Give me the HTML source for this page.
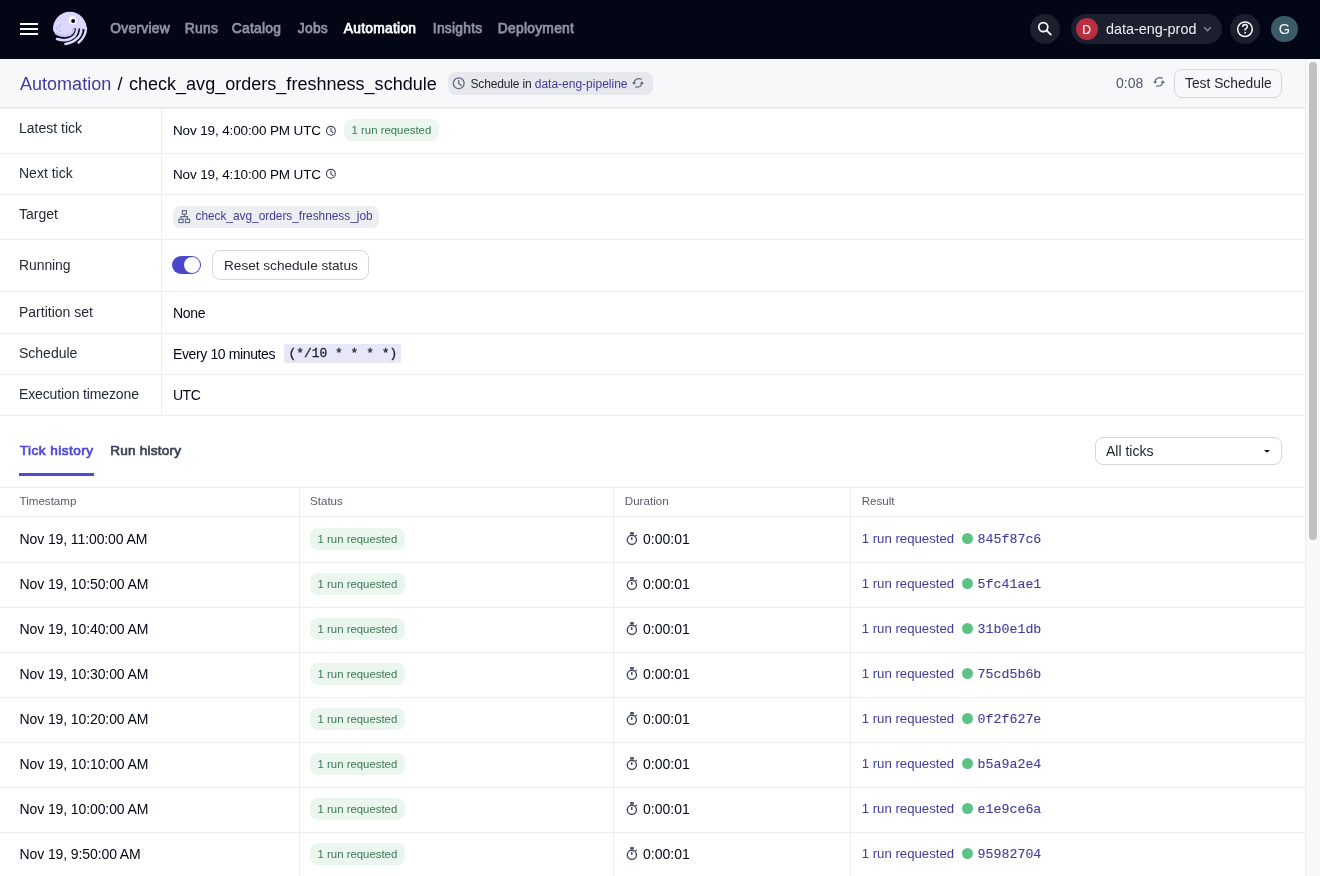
<!DOCTYPE html>
<html><head><meta charset="utf-8"><style>
*{box-sizing:border-box;margin:0;padding:0}
html,body{width:1320px;height:876px;overflow:hidden;background:#fff;font-family:"Liberation Sans",sans-serif;color:#030615}
.abs{position:absolute}
svg{position:absolute;overflow:visible}
#nav{position:absolute;left:0;top:0;width:1320px;height:59px;background:#030615}
.nl{position:absolute;top:21px;font-size:13.8px;letter-spacing:0.27px;font-weight:400;-webkit-text-stroke:0.75px currentColor;color:#8d93a3;white-space:nowrap;line-height:16px}
.circ{position:absolute;border-radius:50%}
#hdr{position:absolute;left:0;top:59px;width:1305px;height:49px;background:#f7f8fa;border-bottom:1px solid #e4e6ea;box-shadow:0 1px 0 #eceef1}
#sb{position:absolute;left:1305px;top:59px;width:15px;height:817px;background:#f8f8f8;border-left:1px solid #ededed}
#thumb{position:absolute;left:1309px;top:62px;width:8px;height:478px;background:#c1c1c1;border-radius:4px}
.hl{position:absolute;left:0;width:1305px;height:1px;background:#eceef2}
.vl{position:absolute;width:1px;background:#eceef2}
.t14{position:absolute;font-size:14px;line-height:16px;white-space:nowrap}
.lbl{color:#252b36;left:19px}
.val{color:#030615;left:173px}
.badge{position:absolute;height:22px;border-radius:8px;background:#eaf6ee;color:#3a7a52;font-size:11.4px;line-height:22px;padding:0 0 0 7.5px;white-space:nowrap}
.link{color:#3e3c9c}
.mono{font-family:"Liberation Mono",monospace;-webkit-text-stroke:0.1px currentColor}
.th{position:absolute;top:494px;font-size:11.6px;line-height:14px;color:#555c6c}
.row{position:absolute;left:0;width:1305px;height:45px}
</style></head><body><div id="wrap" style="position:absolute;left:0;top:0;width:1320px;height:876px;will-change:transform">
<div id="nav">
<div class="abs" style="left:20px;top:22.8px;width:17.5px;height:1.8px;background:#fff"></div>
<div class="abs" style="left:20px;top:27.8px;width:17.5px;height:1.8px;background:#fff"></div>
<div class="abs" style="left:20px;top:32.8px;width:17.5px;height:1.8px;background:#fff"></div>
<svg style="left:48px;top:8px" width="44" height="42" viewBox="0 0 918 876">
<path d="M106 470 A352 352 0 1 1 806 470 L742 440 L650 430 L535 430 Q525 585 330 600 Q170 600 106 470 Z" fill="#dad8fb"/>
<path d="M150 520 Q300 620 460 560 Q525 520 540 440" fill="none" stroke="#c6c2f6" stroke-width="50"/>
<g fill="none" stroke="#dad8fb" stroke-linecap="round">
<path d="M188 648 Q410 715 550 590 Q605 530 612 430" stroke-width="54"/>
<path d="M365 752 Q585 705 665 565 Q700 495 695 420" stroke-width="54"/>
<path d="M640 720 Q795 585 792 420" stroke-width="52"/>
</g>
<circle cx="515" cy="255" r="82" fill="#ffffff"/>
<circle cx="525" cy="272" r="42" fill="#030615"/>
<circle cx="245" cy="370" r="22" fill="#bcb8f2"/>
<circle cx="190" cy="425" r="22" fill="#bcb8f2"/>
<circle cx="245" cy="480" r="22" fill="#bcb8f2"/>
</svg>
<div class="nl" style="left:110.3px">Overview</div>
<div class="nl" style="left:184.8px">Runs</div>
<div class="nl" style="left:231.8px">Catalog</div>
<div class="nl" style="left:297.8px">Jobs</div>
<div class="nl" style="left:343.8px;color:#ffffff">Automation</div>
<div class="nl" style="left:432.8px">Insights</div>
<div class="nl" style="left:497.8px">Deployment</div>
<div class="circ" style="left:1030px;top:14px;width:30px;height:30px;background:#1c1f2d"></div>
<svg style="left:0;top:0" width="1" height="1"><circle cx="1043.3" cy="27.1" r="4.5" fill="none" stroke="#fff" stroke-width="1.7"/><path d="M1046.6 30.4 L1050.8 34.6" stroke="#fff" stroke-width="1.8" stroke-linecap="round"/></svg>
<div class="abs" style="left:1071px;top:14px;width:151px;height:30px;border-radius:15px;background:#1c1f2d"></div>
<div class="circ" style="left:1076px;top:18px;width:22px;height:22px;background:#b92f41"></div>
<div class="abs" style="left:1081.6px;top:22.8px;width:10px;text-align:center;font-size:12px;line-height:14px;color:#f4f4f6;-webkit-text-stroke:0.2px #f4f4f6">D</div>
<div class="abs" style="left:1106px;top:21px;font-size:14.4px;line-height:16px;color:#eef0f4;white-space:nowrap">data-eng-prod</div>
<svg style="left:0;top:0" width="1" height="1"><path d="M1204.2 27.2 L1207.5 30.8 L1210.8 27.2" fill="none" stroke="#8a90a0" stroke-width="1.3"/></svg>
<div class="circ" style="left:1230px;top:14px;width:30px;height:30px;background:#1c1f2d"></div>
<svg style="left:0;top:0" width="1" height="1"><circle cx="1245" cy="29.2" r="7.3" fill="none" stroke="#fff" stroke-width="1.5"/><path d="M1242.7 27.1 Q1242.7 24.6 1245 24.6 Q1247.3 24.6 1247.3 26.8 Q1247.3 28.2 1245.1 29.2 L1245.1 30.6" fill="none" stroke="#fff" stroke-width="1.5"/><rect x="1244.3" y="31.9" width="1.6" height="1.6" fill="#fff"/></svg>
<div class="circ" style="left:1271px;top:15.5px;width:26.5px;height:26.5px;background:#3b5b66"></div>
<div class="abs" style="left:1274px;top:20.8px;width:21px;text-align:center;font-size:14.5px;line-height:16px;color:#f6f7f8">G</div>
</div>
<div id="hdr"></div>
<div class="abs" style="left:20px;top:73px;font-size:18px;line-height:22px;white-space:nowrap;letter-spacing:0.02px;word-spacing:1.3px"><span class="link">Automation</span> / check_avg_orders_freshness_schdule</div>
<div class="abs" style="left:448px;top:72px;width:205px;height:23px;border-radius:8px;background:#e6e8ed"></div>
<svg style="left:0;top:0" width="1" height="1"><circle cx="458.7" cy="83.3" r="5.4" fill="none" stroke="#5f6b7f" stroke-width="1.3"/><path d="M458.7 80.33 V83.3 L461.13 85.46" fill="none" stroke="#5f6b7f" stroke-width="1.3" stroke-linecap="round" stroke-linejoin="round"/></svg>
<div class="abs" style="left:470.5px;top:76.5px;font-size:12px;line-height:14px;white-space:nowrap;color:#1c212b;letter-spacing:-0.15px">Schedule in <span class="link" style="letter-spacing:0">data-eng-pipeline</span></div>
<svg style="left:637.5px;top:83.2px" width="1" height="1" viewBox="0 0 1 1"><g transform="scale(1.0,0.85)" fill="none" stroke="#5f6b7f" stroke-width="1.4" stroke-linecap="round"><path d="M3.2 -4.5 A4.6 4.6 0 0 0 -3.8 -0.2"/><path d="M-2.2 4.5 A4.6 4.6 0 0 0 3.8 0.6"/></g><g transform="scale(1.0,0.85)" fill="#5f6b7f"><path d="M-6.2 -0.6 L-1.6 -0.6 L-3.9 2.2 Z"/><path d="M6.2 0.8 L1.6 0.8 L3.9 -2.0 Z"/></g></svg>
<div class="abs" style="left:1116px;top:75px;font-size:14px;line-height:16px;color:#4f5768">0:08</div>
<svg style="left:1158.5px;top:82px" width="1" height="1" viewBox="0 0 1 1"><g transform="scale(1.0,0.85)" fill="none" stroke="#5f6b7f" stroke-width="1.4" stroke-linecap="round"><path d="M3.2 -4.5 A4.6 4.6 0 0 0 -3.8 -0.2"/><path d="M-2.2 4.5 A4.6 4.6 0 0 0 3.8 0.6"/></g><g transform="scale(1.0,0.85)" fill="#5f6b7f"><path d="M-6.2 -0.6 L-1.6 -0.6 L-3.9 2.2 Z"/><path d="M6.2 0.8 L1.6 0.8 L3.9 -2.0 Z"/></g></svg>
<div class="abs" style="left:1174px;top:69px;width:108px;height:29px;border:1px solid #d3d6de;border-radius:8px;background:#f7f8fa"></div>
<div class="abs" style="left:1185px;top:76px;font-size:13.8px;line-height:16px;color:#1f2430;white-space:nowrap">Test Schedule</div>
<div id="sb"></div><div id="thumb"></div>
<div class="vl" style="left:161px;top:108px;height:307px"></div>
<div class="hl" style="top:153px"></div>
<div class="hl" style="top:194px"></div>
<div class="hl" style="top:239px"></div>
<div class="hl" style="top:291px"></div>
<div class="hl" style="top:333px"></div>
<div class="hl" style="top:374px"></div>
<div class="hl" style="top:415px"></div>
<div class="t14 lbl" style="top:120px">Latest tick</div>
<div class="t14 val" style="top:123px;font-size:13.5px;letter-spacing:-0.13px">Nov 19, 4:00:00 PM UTC</div>
<svg style="left:0;top:0" width="1" height="1"><circle cx="330.9" cy="130.8" r="4.4" fill="none" stroke="#3e4452" stroke-width="1.1"/><path d="M330.9 128.38000000000002 V130.8 L332.88 132.56" fill="none" stroke="#3e4452" stroke-width="1.1" stroke-linecap="round" stroke-linejoin="round"/></svg>
<div class="badge" style="left:344px;top:119px;width:95px">1 run requested</div>
<div class="t14 lbl" style="top:165px">Next tick</div>
<div class="t14 val" style="top:167px;font-size:13.5px;letter-spacing:-0.13px">Nov 19, 4:10:00 PM UTC</div>
<svg style="left:0;top:0" width="1" height="1"><circle cx="330.9" cy="173.8" r="4.4" fill="none" stroke="#3e4452" stroke-width="1.1"/><path d="M330.9 171.38000000000002 V173.8 L332.88 175.56" fill="none" stroke="#3e4452" stroke-width="1.1" stroke-linecap="round" stroke-linejoin="round"/></svg>
<div class="t14 lbl" style="top:206px">Target</div>
<div class="abs" style="left:173px;top:205.5px;width:206px;height:22.5px;border-radius:7px;background:#eceef2"></div>
<svg style="left:0;top:0" width="1" height="1"><g fill="none" stroke="#5f6b7f" stroke-width="1.1"><rect x="182.4" y="210.6" width="4" height="3.6"/><rect x="178.9" y="219.2" width="4.2" height="3.4"/><rect x="185.4" y="219.2" width="4.2" height="3.4"/><path d="M184.4 214.2 V216.6 M181 219.2 V216.6 H187.5 V219.2"/></g></svg>
<div class="abs link" style="left:195.5px;top:209px;font-size:11.85px;line-height:14px;white-space:nowrap">check_avg_orders_freshness_job</div>
<div class="t14 lbl" style="top:256.5px;letter-spacing:-0.1px">Running</div>
<div class="abs" style="left:172px;top:256px;width:29px;height:18px;border-radius:9px;background:#4a47cd"></div>
<div class="circ" style="left:184px;top:257px;width:16px;height:16px;background:#fff"></div>
<div class="abs" style="left:212px;top:250px;width:157px;height:30px;border:1px solid #d3d6de;border-radius:8px"></div>
<div class="abs" style="left:224px;top:257.5px;font-size:13.6px;line-height:16px;color:#252a35;white-space:nowrap">Reset schedule status</div>
<div class="t14 lbl" style="top:303.5px">Partition set</div>
<div class="t14 val" style="top:305px;letter-spacing:-0.35px">None</div>
<div class="t14 lbl" style="top:345px">Schedule</div>
<div class="t14 val" style="top:346px;letter-spacing:-0.38px">Every 10 minutes</div>
<div class="abs" style="left:283.7px;top:344.2px;width:117.5px;height:18.4px;background:#e8e7f8;border-radius:2px"></div>
<div class="abs mono" style="left:288.5px;top:345.6px;font-size:12.95px;line-height:16px;white-space:pre;color:#1c212b;-webkit-text-stroke:0.3px #1c212b">(*/10 * * * *)</div>
<div class="t14 lbl" style="top:386px;letter-spacing:-0.13px">Execution timezone</div>
<div class="t14 val" style="top:387px;letter-spacing:-0.5px">UTC</div>
<div class="abs" style="left:19.8px;top:443px;font-size:13.6px;letter-spacing:0.45px;font-weight:400;-webkit-text-stroke:0.7px currentColor;line-height:16px;color:#4e4ad4;white-space:nowrap">Tick history</div>
<div class="abs" style="left:19px;top:473.4px;width:75px;height:2.2px;background:#4f4bd6"></div>
<div class="abs" style="left:110.3px;top:443px;font-size:13.6px;letter-spacing:0.2px;font-weight:400;-webkit-text-stroke:0.7px currentColor;line-height:16px;color:#3d4455;white-space:nowrap">Run history</div>
<div class="abs" style="left:1094.5px;top:436.7px;width:187.3px;height:28.6px;border:1px solid #d3d6de;border-radius:8px"></div>
<div class="abs" style="left:1106px;top:443px;font-size:14px;line-height:16px;color:#1c212b">All ticks</div>
<svg style="left:0;top:0" width="1" height="1"><path d="M1264 449.9 H1270 L1267 452.8 Z" fill="#0b0e18"/></svg>
<div class="hl" style="top:487px"></div>
<div class="hl" style="top:516px"></div>
<div class="th" style="left:19.5px">Timestamp</div><div class="th" style="left:310px">Status</div><div class="th" style="left:624.8px">Duration</div><div class="th" style="left:861.7px">Result</div>
<div class="vl" style="left:299px;top:487px;height:389px"></div>
<div class="vl" style="left:613px;top:487px;height:389px"></div>
<div class="vl" style="left:850px;top:487px;height:389px"></div>
<div class="t14 val" style="left:19.5px;top:531px;letter-spacing:-0.1px">Nov 19, 11:00:00 AM</div>
<div class="badge" style="left:310px;top:528px;width:95px">1 run requested</div>
<svg style="left:0;top:0" width="1" height="1"><g fill="none" stroke="#3a4150" stroke-width="1.3"><circle cx="631.85" cy="539.85" r="4.6"/><path d="M631.8 537.1 V540.1" stroke-width="1.35"/><path d="M635.4 535.9 L636.8 535" stroke-width="1.2"/></g><rect x="630.1" y="532.1" width="3.8" height="2.4" fill="#4a5160"/></svg>
<div class="t14 val" style="left:643px;top:531px">0:00:01</div>
<div class="t14 link" style="left:861.7px;top:530.8px;font-size:13.2px">1 run requested</div>
<div class="circ" style="left:962.4px;top:533.3px;width:10.9px;height:10.9px;background:#5cc286"></div>
<div class="t14 link mono" style="left:977.5px;top:532px;font-size:13.3px">845f87c6</div>
<div class="hl" style="top:562px"></div>
<div class="t14 val" style="left:19.5px;top:576px;letter-spacing:-0.1px">Nov 19, 10:50:00 AM</div>
<div class="badge" style="left:310px;top:573px;width:95px">1 run requested</div>
<svg style="left:0;top:0" width="1" height="1"><g fill="none" stroke="#3a4150" stroke-width="1.3"><circle cx="631.85" cy="584.85" r="4.6"/><path d="M631.8 582.1 V585.1" stroke-width="1.35"/><path d="M635.4 580.9 L636.8 580" stroke-width="1.2"/></g><rect x="630.1" y="577.1" width="3.8" height="2.4" fill="#4a5160"/></svg>
<div class="t14 val" style="left:643px;top:576px">0:00:01</div>
<div class="t14 link" style="left:861.7px;top:575.8px;font-size:13.2px">1 run requested</div>
<div class="circ" style="left:962.4px;top:578.3px;width:10.9px;height:10.9px;background:#5cc286"></div>
<div class="t14 link mono" style="left:977.5px;top:577px;font-size:13.3px">5fc41ae1</div>
<div class="hl" style="top:607px"></div>
<div class="t14 val" style="left:19.5px;top:621px;letter-spacing:-0.1px">Nov 19, 10:40:00 AM</div>
<div class="badge" style="left:310px;top:618px;width:95px">1 run requested</div>
<svg style="left:0;top:0" width="1" height="1"><g fill="none" stroke="#3a4150" stroke-width="1.3"><circle cx="631.85" cy="629.85" r="4.6"/><path d="M631.8 627.1 V630.1" stroke-width="1.35"/><path d="M635.4 625.9 L636.8 625" stroke-width="1.2"/></g><rect x="630.1" y="622.1" width="3.8" height="2.4" fill="#4a5160"/></svg>
<div class="t14 val" style="left:643px;top:621px">0:00:01</div>
<div class="t14 link" style="left:861.7px;top:620.8px;font-size:13.2px">1 run requested</div>
<div class="circ" style="left:962.4px;top:623.3px;width:10.9px;height:10.9px;background:#5cc286"></div>
<div class="t14 link mono" style="left:977.5px;top:622px;font-size:13.3px">31b0e1db</div>
<div class="hl" style="top:652px"></div>
<div class="t14 val" style="left:19.5px;top:666px;letter-spacing:-0.1px">Nov 19, 10:30:00 AM</div>
<div class="badge" style="left:310px;top:663px;width:95px">1 run requested</div>
<svg style="left:0;top:0" width="1" height="1"><g fill="none" stroke="#3a4150" stroke-width="1.3"><circle cx="631.85" cy="674.85" r="4.6"/><path d="M631.8 672.1 V675.1" stroke-width="1.35"/><path d="M635.4 670.9 L636.8 670" stroke-width="1.2"/></g><rect x="630.1" y="667.1" width="3.8" height="2.4" fill="#4a5160"/></svg>
<div class="t14 val" style="left:643px;top:666px">0:00:01</div>
<div class="t14 link" style="left:861.7px;top:665.8px;font-size:13.2px">1 run requested</div>
<div class="circ" style="left:962.4px;top:668.3px;width:10.9px;height:10.9px;background:#5cc286"></div>
<div class="t14 link mono" style="left:977.5px;top:667px;font-size:13.3px">75cd5b6b</div>
<div class="hl" style="top:697px"></div>
<div class="t14 val" style="left:19.5px;top:711px;letter-spacing:-0.1px">Nov 19, 10:20:00 AM</div>
<div class="badge" style="left:310px;top:708px;width:95px">1 run requested</div>
<svg style="left:0;top:0" width="1" height="1"><g fill="none" stroke="#3a4150" stroke-width="1.3"><circle cx="631.85" cy="719.85" r="4.6"/><path d="M631.8 717.1 V720.1" stroke-width="1.35"/><path d="M635.4 715.9 L636.8 715" stroke-width="1.2"/></g><rect x="630.1" y="712.1" width="3.8" height="2.4" fill="#4a5160"/></svg>
<div class="t14 val" style="left:643px;top:711px">0:00:01</div>
<div class="t14 link" style="left:861.7px;top:710.8px;font-size:13.2px">1 run requested</div>
<div class="circ" style="left:962.4px;top:713.3px;width:10.9px;height:10.9px;background:#5cc286"></div>
<div class="t14 link mono" style="left:977.5px;top:712px;font-size:13.3px">0f2f627e</div>
<div class="hl" style="top:742px"></div>
<div class="t14 val" style="left:19.5px;top:756px;letter-spacing:-0.1px">Nov 19, 10:10:00 AM</div>
<div class="badge" style="left:310px;top:753px;width:95px">1 run requested</div>
<svg style="left:0;top:0" width="1" height="1"><g fill="none" stroke="#3a4150" stroke-width="1.3"><circle cx="631.85" cy="764.85" r="4.6"/><path d="M631.8 762.1 V765.1" stroke-width="1.35"/><path d="M635.4 760.9 L636.8 760" stroke-width="1.2"/></g><rect x="630.1" y="757.1" width="3.8" height="2.4" fill="#4a5160"/></svg>
<div class="t14 val" style="left:643px;top:756px">0:00:01</div>
<div class="t14 link" style="left:861.7px;top:755.8px;font-size:13.2px">1 run requested</div>
<div class="circ" style="left:962.4px;top:758.3px;width:10.9px;height:10.9px;background:#5cc286"></div>
<div class="t14 link mono" style="left:977.5px;top:757px;font-size:13.3px">b5a9a2e4</div>
<div class="hl" style="top:787px"></div>
<div class="t14 val" style="left:19.5px;top:801px;letter-spacing:-0.1px">Nov 19, 10:00:00 AM</div>
<div class="badge" style="left:310px;top:798px;width:95px">1 run requested</div>
<svg style="left:0;top:0" width="1" height="1"><g fill="none" stroke="#3a4150" stroke-width="1.3"><circle cx="631.85" cy="809.85" r="4.6"/><path d="M631.8 807.1 V810.1" stroke-width="1.35"/><path d="M635.4 805.9 L636.8 805" stroke-width="1.2"/></g><rect x="630.1" y="802.1" width="3.8" height="2.4" fill="#4a5160"/></svg>
<div class="t14 val" style="left:643px;top:801px">0:00:01</div>
<div class="t14 link" style="left:861.7px;top:800.8px;font-size:13.2px">1 run requested</div>
<div class="circ" style="left:962.4px;top:803.3px;width:10.9px;height:10.9px;background:#5cc286"></div>
<div class="t14 link mono" style="left:977.5px;top:802px;font-size:13.3px">e1e9ce6a</div>
<div class="hl" style="top:832px"></div>
<div class="t14 val" style="left:19.5px;top:846px;letter-spacing:-0.1px">Nov 19, 9:50:00 AM</div>
<div class="badge" style="left:310px;top:843px;width:95px">1 run requested</div>
<svg style="left:0;top:0" width="1" height="1"><g fill="none" stroke="#3a4150" stroke-width="1.3"><circle cx="631.85" cy="854.85" r="4.6"/><path d="M631.8 852.1 V855.1" stroke-width="1.35"/><path d="M635.4 850.9 L636.8 850" stroke-width="1.2"/></g><rect x="630.1" y="847.1" width="3.8" height="2.4" fill="#4a5160"/></svg>
<div class="t14 val" style="left:643px;top:846px">0:00:01</div>
<div class="t14 link" style="left:861.7px;top:845.8px;font-size:13.2px">1 run requested</div>
<div class="circ" style="left:962.4px;top:848.3px;width:10.9px;height:10.9px;background:#5cc286"></div>
<div class="t14 link mono" style="left:977.5px;top:847px;font-size:13.3px">95982704</div>
<div class="hl" style="top:877px"></div>
</div></body></html>
